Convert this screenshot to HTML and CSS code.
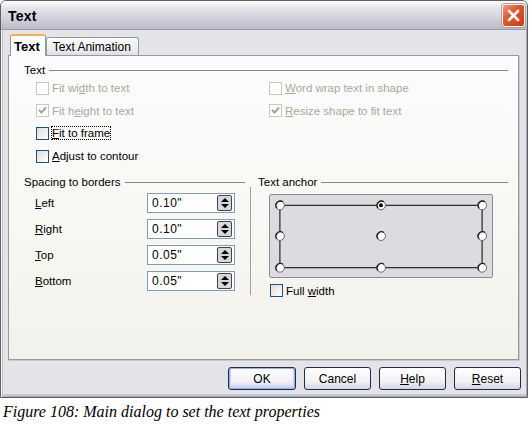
FILE: index.html
```html
<!DOCTYPE html>
<html>
<head>
<meta charset="utf-8">
<link rel="stylesheet" href="styles.css">
</head>
<body>
<div class="dialog">
  <div class="titlebar">
    <span class="title">Text</span>
    <span class="close"><svg width="21" height="21" viewBox="0 0 21 21"><path d="M6 6 L15 15 M15 6 L6 15" stroke="#fff" stroke-width="2.6" stroke-linecap="round"/></svg></span>
  </div>
  <div class="body">
    <div class="tabs">
      <div class="tab active">Text</div>
      <div class="tab">Text Animation</div>
    </div>
    <div class="panel">
      <div class="ghead"><span>Text</span><i></i></div>
      <div class="checks">
        <div class="chk dis"><span class="box"></span><span>Fit wi<u>d</u>th to text</span></div>
        <div class="chk dis"><span class="box"></span><span><u>W</u>ord wrap text in shape</span></div>
        <div class="chk dis"><span class="box checked"><svg width="11" height="11" viewBox="0 0 11 11"><path d="M2 5 L4.5 7.5 L9 2.5" fill="none" stroke="#a5a497" stroke-width="2"/></svg></span><span>Fit h<u>e</u>ight to text</span></div>
        <div class="chk dis"><span class="box checked"><svg width="11" height="11" viewBox="0 0 11 11"><path d="M2 5 L4.5 7.5 L9 2.5" fill="none" stroke="#a5a497" stroke-width="2"/></svg></span><span><u>R</u>esize shape to fit text</span></div>
        <div class="chk"><span class="box"></span><span class="focus"><u>F</u>it to frame</span></div>
        <div></div>
        <div class="chk"><span class="box"></span><span><u>A</u>djust to contour</span></div>
      </div>
      <div class="lower">
        <div class="spacing">
          <div class="ghead"><span>Spacing to borders</span><i></i></div>
          <div class="rows">
            <div class="row"><span class="lbl"><u>L</u>eft</span><span class="field"><span>0.10"</span><span class="spin"><b class="up"></b><b class="dn"></b></span></span></div>
            <div class="row"><span class="lbl"><u>R</u>ight</span><span class="field"><span>0.10"</span><span class="spin"><b class="up"></b><b class="dn"></b></span></span></div>
            <div class="row"><span class="lbl"><u>T</u>op</span><span class="field"><span>0.05"</span><span class="spin"><b class="up"></b><b class="dn"></b></span></span></div>
            <div class="row"><span class="lbl"><u>B</u>ottom</span><span class="field"><span>0.05"</span><span class="spin"><b class="up"></b><b class="dn"></b></span></span></div>
          </div>
        </div>
        <div class="sep"></div>
        <div class="anchor">
          <div class="ghead"><span>Text anchor</span><i></i></div>
          <div class="abox">
            <svg width="224" height="84" viewBox="0 0 224 84">
              <rect x="10" y="11" width="204" height="63" fill="none" stroke="#000" stroke-width="1"/>
              <g fill="#fff" stroke="#666" stroke-width="1">
                <circle cx="10" cy="11" r="4.5"/><circle cx="112" cy="11" r="4.5"/><circle cx="214" cy="11" r="4.5"/>
                <circle cx="10" cy="42" r="4.5"/><circle cx="112" cy="42" r="4.5"/><circle cx="214" cy="42" r="4.5"/>
                <circle cx="10" cy="74" r="4.5"/><circle cx="112" cy="74" r="4.5"/><circle cx="214" cy="74" r="4.5"/>
              </g>
              <g fill="none" stroke="#222" stroke-width="1.3">
                <path d="M7 14 A4.5 4.5 0 0 1 13 7.5"/><path d="M109 14 A4.5 4.5 0 0 1 115 7.5"/><path d="M211 14 A4.5 4.5 0 0 1 217 7.5"/>
                <path d="M7 45 A4.5 4.5 0 0 1 13 38.5"/><path d="M109 45 A4.5 4.5 0 0 1 115 38.5"/><path d="M211 45 A4.5 4.5 0 0 1 217 38.5"/>
                <path d="M7 77 A4.5 4.5 0 0 1 13 70.5"/><path d="M109 77 A4.5 4.5 0 0 1 115 70.5"/><path d="M211 77 A4.5 4.5 0 0 1 217 70.5"/>
              </g>
              <circle cx="112" cy="11" r="2" fill="#000"/>
            </svg>
          </div>
          <div class="chk fw"><span class="box"></span><span>Full <u>w</u>idth</span></div>
        </div>
      </div>
    </div>
    <div class="buttons">
      <button class="btn def">OK</button>
      <button class="btn">Cancel</button>
      <button class="btn"><u>H</u>elp</button>
      <button class="btn"><u>R</u>eset</button>
    </div>
  </div>
</div>
<div class="caption">Figure 108: Main dialog to set the text properties</div>
</body>
</html>
```
FILE: styles.css
```css
html, body { margin: 0; padding: 0; background: #fff; }
body { font-family: Tahoma, "Liberation Sans", "DejaVu Sans", sans-serif; font-size: 11.5px; color: #000; }
.dialog {
  width: 528px; height: 398px; box-sizing: border-box;
  border: 1px solid #5e5e66; border-radius: 6px 6px 0 0;
  background: #e3e3e8;
  box-shadow: inset 1px 0 0 #fff, inset -1px 0 0 #a9a9b2, inset 2px 0 0 #c0c0c8, inset 0 -1px 0 #a9a9b2, inset 0 -3px 0 #c9c9d0;
  display: flex; flex-direction: column;
}
.titlebar {
  height: 28px; flex: none; display: flex; align-items: center; justify-content: space-between;
  padding: 0 2px 0 7px;
  background: linear-gradient(#ffffff 0%, #e4e4ec 25%, #d3d3de 60%, #b9bac8 100%);
  border-radius: 5px 5px 0 0;
  border-bottom: 1px solid #9a9aa6;
}
.title { font-weight: bold; font-size: 14px; letter-spacing: 0.2px; color: #000; padding-top: 2px; }
.close {
  width: 21px; height: 21px; border-radius: 3px; border: 1px solid #fff;
  background: linear-gradient(135deg, #f09a7a 0%, #e2582e 40%, #c83c16 100%);
  box-shadow: 0 0 0 1px #b0a0a0;
  display: flex; margin-top: 1px;
}
.body { flex: 1; display: flex; flex-direction: column; padding: 4px 7px 0 7px; }
.tabs { display: flex; align-items: flex-end; height: 21px; padding-left: 2px; }
.tab {
  height: 18px; padding: 0 7px 0 6px; display: flex; align-items: center;
  border: 1px solid #919b9c; border-bottom: none; border-radius: 3px 3px 0 0;
  background: linear-gradient(#fefefe, #e8e8ed 80%, #dcdce4);
  font-size: 12px; box-sizing: border-box;
}
.tab.active {
  font-weight: bold; font-size: 13px; padding: 0 5px 0 3px;
  background: #fcfcfe; border-top: 2px solid #f5b24a; height: 22px;
  position: relative; top: 1px;
}
.panel {
  width: 511px; height: 305px; box-sizing: border-box;
  border: 1px solid #919b9c;
  background: linear-gradient(#fcfcfe, #f7f7f2 60%, #f2f1ea);
  padding: 7px 10px 0 15px;
  box-shadow: 1px 1px 0 #c6c6cc;
}
.ghead { display: flex; align-items: center; height: 14px; }
.ghead span { padding-right: 4px; white-space: nowrap; }
.ghead i { flex: 1; height: 0; border-top: 1px solid #888; margin-top: 1px; }
.checks { display: grid; grid-template-columns: 233px 1fr; grid-auto-rows: 22.6px; margin-top: 0; padding-left: 12px; }
.chk { display: flex; align-items: center; }
.box {
  width: 11px; height: 11px; border: 1px solid #1c5180; margin-right: 3px; flex: none;
  background: linear-gradient(135deg, #dcdcd7, #f4f4f2 70%, #fff);
  display: flex; align-items: center; justify-content: center;
}
.chk.dis { color: #aca899; }
.chk.dis .box { border-color: #cac8bb; background: #fff; }
.focus { outline: 1px dotted #000; outline-offset: 0; }
.lower { display: flex; margin-top: 8px; }
.spacing { width: 221px; }
.rows { padding: 1px 10px 0 11px; }
.row { display: flex; align-items: center; height: 26px; justify-content: space-between; }
.field {
  width: 88px; height: 20px; box-sizing: border-box; border: 1px solid #7f9db9; background: #fff;
  display: flex; align-items: center; justify-content: space-between; padding: 0 2px 0 4px;
  font-size: 12px; letter-spacing: 0.5px;
}
.spin {
  width: 15px; height: 16px; box-sizing: border-box; border: 1px solid #444; border-radius: 2px;
  background: #d6d6dc; display: flex; flex-direction: column; align-items: center; justify-content: center; gap: 2px;
}
.spin b { width: 0; height: 0; border-left: 4px solid transparent; border-right: 4px solid transparent; }
.spin .up { border-bottom: 4px solid #000; }
.spin .dn { border-top: 4px solid #000; }
.sep { width: 0; border-left: 1px solid #a0a0a0; margin: 12px 7px 0 5px; height: 108px; }
.anchor { flex: 1; }
.abox {
  width: 224px; height: 84px; margin: 5px 0 0 11px; border: 1px solid #8c8c94; border-radius: 2px;
  background: #dbdbe0; box-sizing: border-box; display: flex; align-items: center; justify-content: center;
}
.abox svg { display: block; }
.fw { margin: 6px 0 0 12px; }
.buttons { display: flex; justify-content: flex-end; gap: 8px; margin-top: 7px; width: 513px; }
.btn {
  width: 67px; height: 23px; font: inherit; font-size: 12px; color: #000;
  border: 1px solid #1e2a52; border-radius: 3px;
  background: linear-gradient(#ffffff, #f3f3f7 60%, #d6d6e2);
  padding: 0;
}
.btn.def { box-shadow: inset 0 0 0 1px #97b3ec, inset 0 -1px 0 2px #c8d6f4; width: 68px; }
.caption {
  font-family: "Liberation Serif", "Times New Roman", serif; font-style: italic; font-size: 16px;
  margin: 5px 0 0 3px;
}
```
